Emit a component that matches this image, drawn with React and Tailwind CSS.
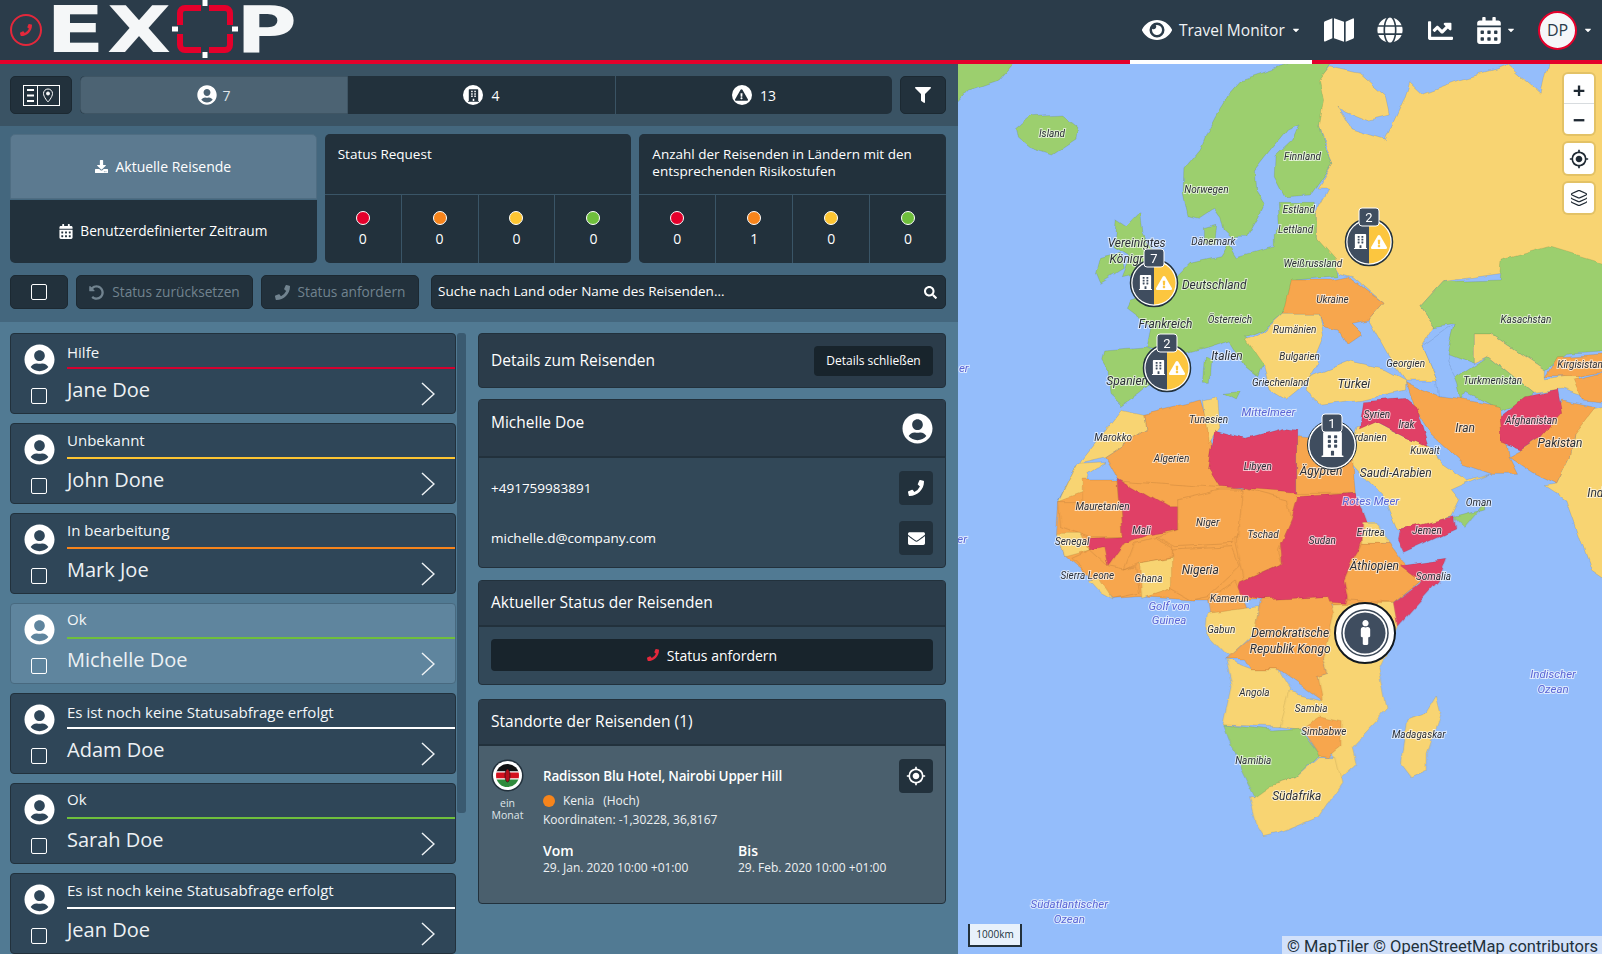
import { FaEye, FaMap, FaGlobe, FaChartLine, FaCalendarAlt, FaFilter, FaSearch, FaUndoAlt, FaPhoneAlt, FaEnvelope, FaDownload, FaUserCircle, FaBuilding, FaExclamationTriangle, FaMale, FaCaretDown } from "react-icons/fa";
import { MdGpsFixed } from "react-icons/md";
import { Layers } from "lucide-react";

const RISK = { red: "#e4002b", orange: "#f7841b", yellow: "#fdc532", green: "#6fbf3c" };

const TRAVELERS = [
  { status: "Hilfe", name: "Jane Doe", line: "#d4012f", top: 8 },
  { status: "Unbekannt", name: "John Done", line: "#fdc532", top: 6 },
  { status: "In bearbeitung", name: "Mark Joe", line: "#f7841b", top: 6 },
  { status: "Ok", name: "Michelle Doe", line: "#6fbf3c", active: true, top: 5 },
  { status: "Es ist noch keine Statusabfrage erfolgt", name: "Adam Doe", line: "#ffffff", top: 8 },
  { status: "Ok", name: "Sarah Doe", line: "#6fbf3c", top: 5 },
  { status: "Es ist noch keine Statusabfrage erfolgt", name: "Jean Doe", line: "#ffffff", top: 6 },
];

// map shapes, coordinates were read off the zoomed reference (x * 2.435, y * 3)
const SEA = "#94bdfb";
const G = "#9ccf6e";
const Y = "#f8d472";
const O = "#f7a64d";
const R = "#e04066";

const NORTH = [
  [G, "-20,-10 150,-10 100,60 30,90 -20,160"],
  [G, "145,200 175,170 255,165 290,200 285,240 230,285 180,265 150,235"],
  [Y, "875,60 905,20 975,40 1040,110 1050,165 1000,180 940,150 925,135 960,210 1040,240 1085,120 1100,65 1130,100 1220,60 1310,30 1340,15 1420,100 1440,-10 1600,-10 1600,640 1325,640 1180,665 1125,740 1160,800 1130,860 1165,960 1090,960 1050,890 1000,780 1035,730 960,650 930,640 870,530 870,460 900,390 875,390 915,310 880,200"],
  [G, "860,-10 920,-10 880,60 890,120 880,200 895,260 915,310 860,405 795,410 770,350 772,290 815,240 830,195 800,210 760,270 722,330 725,390 745,430 730,470 700,535 670,535 648,510 640,470 625,445 585,478 560,470 548,400 550,330 590,270 610,210 640,140 660,100 690,60"],
  [G, "780,430 870,430 870,530 920,600 925,650 820,660 790,760 740,810 700,830 745,900 730,950 700,920 660,840 610,860 540,885 460,860 470,800 410,745 420,720 470,700 530,660 570,610 640,590 660,550 680,590 770,560 770,530 782,500"],
  [G, "385,480 410,500 445,455 450,520 480,590 470,630 400,650 420,590 380,560"],
  [G, "345,595 395,580 405,625 345,670 335,640"],
  [G, "600,500 630,490 625,560 600,550"],
  [G, "355,870 460,860 520,900 490,950 440,1000 400,1035 370,1000 365,930 350,900"],
  [G, "600,890 615,900 612,970 595,970"],
  [G, "650,1000 690,995 680,1020"],
  [G, "1600,620 1440,560 1325,600 1320,660 1180,665 1125,740 1160,800 1210,790 1190,880 1255,910 1255,825 1300,825 1430,930 1480,880 1600,870"],
  [O, "810,660 910,660 950,650 1035,730 1000,780 960,790 985,820 950,850 930,810 890,800 880,760 790,760"],
  [Y, "790,760 880,760 890,830 870,890 880,910 850,970 800,1020 760,990 745,920 700,840 745,810"],
  [Y, "860,950 950,905 1045,930 1090,960 1090,990 985,1020 890,1035 850,990"],
  [Y, "1255,825 1300,825 1430,930 1430,960 1510,940 1520,1010 1470,990 1400,1000 1290,890 1255,910"],
  [G, "1205,960 1290,890 1400,1000 1370,1030 1320,1050 1240,1000 1225,1030"],
  [O, "1460,890 1600,880 1600,930 1510,950 1430,950"],
  [O, "1500,960 1600,930 1600,1030 1520,1020"],
  [SEA, "1130,860 1210,790 1190,900 1215,960 1230,1030 1170,1010 1165,960"],
  [Y, "1500,1060 1600,1030 1600,1580 1540,1530 1480,1320 1430,1280 1460,1275 1490,1200 1500,1120"],
  [O, "1090,965 1130,990 1170,1010 1235,1020 1320,1040 1340,1190 1360,1240 1300,1240 1230,1210 1150,1120 1110,1040"],
  [O, "1470,1020 1550,1040 1500,1120 1490,1200 1460,1275 1400,1240 1340,1190 1370,1170 1420,1130"],
  [R, "1380,1010 1460,990 1470,1060 1420,1130 1370,1170 1325,1150 1320,1070"],
  [Y, "970,1100 1020,1085 1090,1130 1150,1160 1180,1210 1240,1260 1290,1240 1200,1290 1220,1320 1200,1370 1130,1400 1070,1410 1040,1320 950,1200"],
  [R, "985,1025 1090,1015 1115,1040 1145,1160 1090,1130 1020,1085 975,1110"],
  [Y, "400,1045 455,1060 460,1110 360,1190 290,1210 245,1320 300,1200"],
  [Y, "245,1325 290,1210 360,1205 315,1240 300,1325"],
  [O, "455,1060 590,1020 610,1100 640,1290 510,1340 390,1255 360,1190 460,1110"],
  [Y, "595,1020 630,1010 635,1100 610,1150"],
  [R, "625,1110 700,1135 790,1105 825,1110 825,1310 780,1320 690,1285 640,1290 610,1230"],
  [O, "825,1130 960,1150 970,1300 825,1310"],
];

// these were read off the lower crop, they get moved down by 1320
const SOUTH = [
  [O, "245,5 390,-60 825,-20 970,-20 1000,80 1075,190 1130,240 1050,320 910,315 735,300 610,300 570,300 440,290 380,295 330,240 260,170 240,100"],
  [O, "245,5 300,5 300,-60 390,-60 400,110 320,110 250,80"],
  [R, "390,-65 510,20 535,20 535,90 460,105 405,130 365,200 355,140 320,150 320,115 400,110"],
  [O, "535,0 640,-30 690,-30 700,70 670,130 530,140 480,110 535,90"],
  [O, "690,-35 800,0 810,60 780,150 790,190 700,240 680,130"],
  [R, "825,-10 970,-20 1000,80 985,110 955,240 945,310 820,300 730,300 680,280 690,245 790,190 785,130 810,60"],
  [Y, "985,70 1020,70 1050,130 985,130"],
  [O, "985,130 1050,130 1080,180 1130,240 1060,310 950,300 940,240 960,180"],
  [R, "1075,195 1190,175 1170,240 1065,385 1050,320 1130,245"],
  [R, "1075,90 1205,50 1210,90 1085,160 1070,120"],
  [G, "1205,55 1280,30 1280,10 1230,85"],
  [Y, "240,100 300,100 320,150 260,170"],
  [O, "275,175 320,150 365,200 405,210 430,200 440,280 380,295 330,240"],
  [O, "405,210 430,130 480,115 520,140 520,170 440,190"],
  [Y, "440,190 530,170 520,265 445,295"],
  [Y, "320,240 345,235 380,300 350,280"],
  [O, "520,150 670,140 690,200 610,290 570,300 520,265"],
  [O, "610,300 680,240 690,270 710,340 615,340"],
  [Y, "610,340 730,320 720,400 660,470 605,400"],
  [Y, "910,315 1060,310 1070,380 1025,500 1045,630 960,740 970,790 925,840 915,760 880,770 845,690 785,680 785,570 880,600 875,530 900,520 890,480"],
  [O, "735,300 900,290 915,340 890,480 900,520 875,530 885,600 780,510 715,510 700,480 650,480 715,410"],
  [Y, "650,480 715,510 780,510 810,570 785,680 645,675 665,560"],
  [G, "645,675 770,690 830,685 880,765 825,830 765,855 755,885 720,890 680,790"],
  [O, "835,685 880,650 935,665 935,740 905,770 880,765"],
  [Y, "720,890 760,855 825,830 880,770 920,770 935,850 880,950 780,1000 745,1010 730,980 710,890"],
  [Y, "1165,590 1175,640 1140,760 1140,810 1105,830 1080,790 1095,660 1140,640"],
];

// [text, x, y, font size, sea label]
const LABELS = [
  ["Island", 229, 220, 10], ["Finnland", 839, 288, 10], ["Norwegen", 605, 389, 10], ["Estland", 830, 447, 10],
  ["Lettland", 822, 509, 10], ["Dänemark", 622, 545, 10], ["Vereinigtes", 435, 549, 12], ["Königr", 410, 597, 12],
  ["Deutschland", 624, 675, 12], ["Weißrussland", 864, 610, 10], ["Ukraine", 912, 718, 10], ["Kasachstan", 1383, 777, 10],
  ["Frankreich", 505, 791, 12], ["Österreich", 662, 777, 10], ["Rumänien", 820, 807, 10], ["Bulgarien", 832, 888, 10],
  ["Italien", 655, 887, 12], ["Georgien", 1090, 910, 10], ["Kirgisistan", 1515, 913, 10], ["Spanien", 412, 962, 12],
  ["Griechenland", 785, 968, 10], ["Türkei", 964, 969, 12.5], ["Turkmenistan", 1302, 961, 10], ["Mittelmeer", 756, 1055, 11.5, true],
  ["Tunesien", 610, 1079, 10], ["Marokko", 378, 1133, 10], ["Syrien", 1020, 1063, 10], ["Irak", 1092, 1094, 10],
  ["Afghanistan", 1396, 1080, 10], ["Iran", 1235, 1103, 12], ["rdanien", 1005, 1133, 10], ["Pakistan", 1466, 1150, 12],
  ["Kuwait", 1137, 1170, 10], ["Algerien", 520, 1196, 10], ["Libyen", 730, 1218, 10], ["Ägypten", 884, 1232, 12],
  ["Saudi-Arabien", 1066, 1240, 12], ["Ind", 1552, 1300, 12], ["Rotes Meer", 1005, 1323, 11.5, true], ["Oman", 1268, 1327, 10],
  ["Mauretanien", 352, 1340, 10], ["Niger", 608, 1387, 10], ["Mali", 447, 1410, 10], ["Tschad", 743, 1423, 10],
  ["Eritrea", 1005, 1418, 10], ["Jemen", 1142, 1411, 10], ["Sudan", 887, 1441, 10], ["Senegal", 278, 1444, 10],
  ["Äthiopien", 1014, 1518, 12], ["Nigeria", 590, 1529, 12], ["Somalia", 1158, 1550, 10], ["Sierra Leone", 315, 1546, 10],
  ["Ghana", 464, 1556, 10], ["Kamerun", 661, 1615, 10], ["Golf von", 514, 1638, 11.5, true], ["Guinea", 514, 1681, 11.5, true],
  ["Gabun", 641, 1709, 10], ["Demokratische", 809, 1720, 12], ["Republik Kongo", 809, 1768, 12], ["Indischer", 1449, 1843, 11.5, true],
  ["Ozean", 1449, 1887, 11.5, true], ["Angola", 722, 1898, 10], ["Sambia", 860, 1944, 10], ["Simbabwe", 891, 2014, 10],
  ["Madagaskar", 1122, 2023, 10], ["Namibia", 719, 2101, 10], ["Südafrika", 825, 2207, 12], ["Südatlantischer", 271, 2533, 11.5, true],
  ["Ozean", 271, 2577, 11.5, true], ["er", 14, 925, 11.5, true], ["er", 10, 1438, 11.5, true],
];

function px(x) {
  return 958 + x / 2.435;
}
function py(y) {
  return 60 + y / 3;
}

function Dark({ className = "", children }) {
  return <div className={`bg-[#22313c] border border-[#1c2932] ${className}`}>{children}</div>;
}

function RiskCell({ color, value }) {
  return (
    <div className="flex-1 bg-[#22313c] flex flex-col items-center pt-[16px] gap-[2px]">
      <span className="w-[14px] h-[14px] rounded-full border border-white" style={{ backgroundColor: color }} />
      <span className="text-[14px] leading-[24px]">{value}</span>
    </div>
  );
}

function RiskPanel({ title, values }) {
  return (
    <div className="w-[307px] rounded-[5px] overflow-hidden flex flex-col gap-px bg-[#3a5567]">
      <div className="h-[60px] bg-[#22313c] px-[13px] pt-[12px] text-[13.500px] leading-[17px]">{title}</div>
      <div className="h-[68px] flex gap-px">
        <RiskCell color={RISK.red} value={values[0]} />
        <RiskCell color={RISK.orange} value={values[1]} />
        <RiskCell color={RISK.yellow} value={values[2]} />
        <RiskCell color={RISK.green} value={values[3]} />
      </div>
    </div>
  );
}

function TravelerCard({ t }) {
  return (
    <div className={`h-[81px] shrink-0 rounded-[4px] border border-[#22313c] flex ${t.active ? "bg-[#5f859e] border-[#48697f]" : "bg-[#2f4658]"}`}>
      <div className="w-[56px] shrink-0 flex flex-col items-center pt-[10px]">
        <FaUserCircle className="w-[31px] h-[31px] text-white" />
        <span className="mt-[13px] w-[16px] h-[16px] rounded-[2px] border border-white" />
      </div>
      <div className="flex-1 min-w-0 flex flex-col">
        <div className="h-[33px] text-[15px] leading-[20px] text-[#f3f6f8]" style={{ paddingTop: t.top }}>{t.status}</div>
        <div className="h-[2px]" style={{ backgroundColor: t.line }} />
        <div className="flex-1 flex items-center justify-between pr-[20px]">
          <span className="text-[20px] leading-[26px] text-[#edf1f4] mb-[3px]">{t.name}</span>
          <svg className="mt-[6px]" width="14" height="24" viewBox="0 0 14 24" fill="none" stroke="#eef2f5" strokeWidth="1.500">
            <path d="M1 1l12 11L1 23" />
          </svg>
        </div>
      </div>
    </div>
  );
}

function IconBtn({ children }) {
  return <div className="w-[34px] h-[34px] shrink-0 rounded-[4px] bg-[#22313c] flex items-center justify-center text-white">{children}</div>;
}

function Badge({ x, y, n }) {
  return (
    <g>
      <rect x={x - 10} y={y - 9} width="20" height="18" rx="3" fill="#3f4d5f" stroke="#fff" strokeWidth="1" />
      <text x={x} y={y + 0.5} textAnchor="middle" dominantBaseline="central" fontSize="13" fill="#fff" fontFamily="Roboto, sans-serif">{n}</text>
    </g>
  );
}

function SplitMarker({ x, y, n }) {
  return (
    <g>
      <circle cx={x} cy={y} r="23.5" fill="#fff" stroke="#22313c" strokeWidth="1.500" />
      <path d={`M${x} ${y - 21.5}A21.5 21.5 0 0 0 ${x} ${y + 21.5}Z`} fill="#3f4d5f" />
      <path d={`M${x} ${y - 21.5}A21.5 21.5 0 0 1 ${x} ${y + 21.5}Z`} fill="#fcc63f" />
      <FaBuilding x={x - 16} y={y - 8} size={15} color="#fff" />
      <FaExclamationTriangle x={x + 2} y={y - 8} size={16} color="#fff" />
      <Badge x={x} y={y - 25} n={n} />
    </g>
  );
}

function WorldMap() {
  return (
    <svg className="absolute inset-0 w-full h-full" viewBox="958 64 644 890">
      <defs>
        {/* roughens the straight polygon edges so coasts look less cut out */}
        <filter id="rough" filterUnits="userSpaceOnUse" x="940" y="50" width="680" height="920">
          <feTurbulence type="fractalNoise" baseFrequency="0.04" numOctaves="3" seed="4" />
          <feDisplacementMap in="SourceGraphic" scale="8" xChannelSelector="R" yChannelSelector="G" />
        </filter>
      </defs>
      <rect x="958" y="64" width="644" height="890" fill={SEA} />
      <g filter="url(#rough)">
        <g transform="translate(958 60) scale(0.41068 0.33333)" stroke="#000" strokeOpacity="0.12" strokeWidth="2" strokeLinejoin="round">
          {NORTH.map(([fill, points], i) => <polygon key={i} fill={fill} points={points} />)}
          <g transform="translate(0 1320)">
            {SOUTH.map(([fill, points], i) => <polygon key={i} fill={fill} points={points} />)}
          </g>
        </g>
      </g>
      {LABELS.map(([text, x, y, size, sea], i) => (
        <text
          key={i}
          x={px(x)}
          y={py(y)}
          textAnchor="middle"
          dominantBaseline="central"
          fontFamily="Roboto, sans-serif"
          fontStyle="italic"
          fontSize={size}
          fill={sea ? "#5b66d6" : "#2c3038"}
          stroke="#fff"
          strokeOpacity="0.65"
          strokeWidth="2"
          paintOrder="stroke"
        >
          {text}
        </text>
      ))}
      <SplitMarker x={1154} y={283} n={7} />
      <SplitMarker x={1369} y={242} n={2} />
      <SplitMarker x={1167} y={368} n={2} />
      <g>
        <circle cx="1332" cy="445" r="23.5" fill="#3f4d5f" stroke="#fff" strokeWidth="2" />
        <circle cx="1332" cy="445" r="24.5" fill="none" stroke="#22313c" strokeWidth="1" />
        <FaBuilding x={1320} y={432} size={25} color="#fff" />
        <Badge x={1332} y={423} n={1} />
      </g>
      <g>
        <circle cx="1365" cy="633" r="30" fill="#fff" stroke="#11181f" strokeWidth="2" />
        <circle cx="1365" cy="633" r="23" fill="#fff" stroke="#3a4757" strokeWidth="1.500" />
        <circle cx="1365" cy="633" r="20.500" fill="#3f4d5f" />
        <FaMale x={1353} y={620} size={25} color="#fff" />
      </g>
    </svg>
  );
}

export default function App() {
  return (
    <div className="w-[1602px] h-[954px] overflow-hidden flex flex-col text-white font-['Open_Sans',sans-serif]">
      <header className="h-[64px] shrink-0 bg-[#2b3c4a] border-b-4 border-[#e4002b] flex items-center relative">
        <div className="ml-[10px] w-[32px] h-[32px] rounded-full border-2 border-[#e4283b] flex items-center justify-center">
          <FaPhoneAlt className="w-[12px] h-[12px] text-[#e4283b] -scale-x-100" />
        </div>
        <div className="ml-[4px] h-[60px] flex items-center font-['DejaVu_Sans',sans-serif] font-bold text-[64px] leading-[56px] text-[#f5f7f8]">
          <span className="w-[61px] scale-x-[1.34] origin-left">E</span>
          <span className="w-[65px] scale-x-[1.3] origin-left">X</span>
          <svg className="w-[66px] h-[60px]" viewBox="0 0 66 60">
            <path d="M29 8H13a5 5 0 0 0-5 5v12M37 8h16a5 5 0 0 1 5 5v12M29 50H13a5 5 0 0 1-5-5V34M37 50h16a5 5 0 0 0 5-5V34" fill="none" stroke="#e4002b" strokeWidth="6" />
            <rect x="30.500" y="0" width="5" height="6" fill="#fff" />
            <rect x="30.500" y="52" width="5" height="6" fill="#fff" />
            <rect x="0" y="26.500" width="6" height="5" fill="#fff" />
            <rect x="60" y="26.500" width="6" height="5" fill="#fff" />
          </svg>
          <span className="ml-[-2px] scale-x-[1.3] origin-left">P</span>
        </div>
        <nav className="ml-auto flex items-center h-full">
          <div className="relative w-[182px] h-[60px] flex items-center pl-[12px]">
            <FaEye className="w-[30px] h-[30px]" />
            <span className="ml-[7px] mt-[1px] text-[15.500px] text-[#f0f3f5]">Travel Monitor</span>
            <FaCaretDown className="ml-[6px] w-[10px] h-[10px]" />
            <span className="absolute left-0 right-0 -bottom-[4px] h-[4px] bg-white" />
          </div>
          <FaMap className="ml-[12px] w-[30px] h-[28px]" />
          <FaGlobe className="ml-[23px] w-[26px] h-[26px]" />
          <FaChartLine className="ml-[24px] w-[27px] h-[25px]" />
          <FaCalendarAlt className="ml-[23px] w-[24px] h-[27px]" />
          <FaCaretDown className="ml-[5px] w-[10px] h-[10px]" />
          <div className="ml-[22px] w-[39px] h-[39px] rounded-full bg-[#f5f7f9] border-2 border-[#e4002b] flex items-center justify-center text-[#2b3c4a] text-[16px]">DP</div>
          <FaCaretDown className="ml-[6px] mr-[9px] w-[10px] h-[10px]" />
        </nav>
      </header>

      <div className="flex-1 flex min-h-0">
        <div className="w-[958px] shrink-0 flex flex-col">
          <div className="h-[62px] shrink-0 bg-[#3a5364] pt-[12px] pl-[10px] pr-[12px] flex gap-[8px]">
            <Dark className="w-[62px] h-[38px] rounded-[5px] flex items-center justify-center">
              <svg width="37" height="21" viewBox="0 0 37 21" fill="none" stroke="#fff">
                <rect x="0.500" y="0.500" width="36" height="20" />
                <path d="M14.500 0v21" />
                <path d="M4 5h7M4 10.500h7M4 16h7" strokeWidth="2" />
                <path d="M25 4a4.500 4.500 0 0 0-4.500 4.500C20.500 12 25 17 25 17s4.500-5 4.500-8.500A4.500 4.500 0 0 0 25 4z" />
                <circle cx="25" cy="8.500" r="1.500" fill="#fff" />
              </svg>
            </Dark>
            <div className="w-[812px] h-[38px] flex rounded-[5px] overflow-hidden bg-[#22313c] text-[14px]">
              <div className="w-[268px] bg-[#4c6373] border border-[#3f5564] rounded-l-[5px] flex items-center justify-center gap-[5px]">
                <FaUserCircle className="w-[20px] h-[20px]" />
                <span className="text-[#dfe5e9]">7</span>
              </div>
              <div className="w-[268px] border-r border-[#3a5364] flex items-center justify-center gap-[8px]">
                <span className="w-[20px] h-[20px] rounded-full bg-white flex items-center justify-center"><FaBuilding className="w-[11px] h-[13px] text-[#22313c]" /></span>
                <span>4</span>
              </div>
              <div className="flex-1 flex items-center justify-center gap-[8px]">
                <span className="w-[20px] h-[20px] rounded-full bg-white flex items-center justify-center"><FaExclamationTriangle className="w-[13px] h-[12px] text-[#22313c]" /></span>
                <span>13</span>
              </div>
            </div>
            <Dark className="w-[46px] h-[38px] rounded-[5px] flex items-center justify-center">
              <FaFilter className="w-[16px] h-[16px]" />
            </Dark>
          </div>

          <div className="h-[196px] shrink-0 bg-[#44677e] pt-[8px] pl-[10px] pr-[12px] flex flex-col gap-[12px]">
            <div className="h-[129px] flex gap-[8px]">
              <div className="w-[307px] flex flex-col gap-px">
                <div className="h-[65px] bg-[#5c7a90] border border-[#4f6d82] rounded-t-[5px] flex items-center justify-center gap-[7px] text-[14px]">
                  <FaDownload className="w-[13px] h-[13px]" />
                  <span>Aktuelle Reisende</span>
                </div>
                <div className="h-[63px] bg-[#22313c] rounded-b-[5px] flex items-center justify-center gap-[7px] text-[13.700px]">
                  <FaCalendarAlt className="w-[14px] h-[15px]" />
                  <span>Benutzerdefinierter Zeitraum</span>
                </div>
              </div>
              <RiskPanel title="Status Request" values={[0, 0, 0, 0]} />
              <RiskPanel title={<>Anzahl der Reisenden in Ländern mit den<br />entsprechenden Risikostufen</>} values={[0, 1, 0, 0]} />
            </div>
            <div className="h-[34px] flex">
              <Dark className="w-[58px] rounded-[5px] flex items-center justify-center">
                <span className="w-[16px] h-[16px] rounded-[2px] border border-white" />
              </Dark>
              <Dark className="ml-[8px] w-[177px] rounded-[5px] flex items-center justify-center gap-[8px] text-[13.700px] text-[#71838f]">
                <FaUndoAlt className="w-[15px] h-[15px]" />
                <span>Status zurücksetzen</span>
              </Dark>
              <Dark className="ml-[8px] w-[158px] rounded-[5px] flex items-center justify-center gap-[8px] text-[13.700px] text-[#71838f]">
                <FaPhoneAlt className="w-[15px] h-[15px] -scale-x-100" />
                <span>Status anfordern</span>
              </Dark>
              <Dark className="ml-[12px] flex-1 rounded-[5px] flex items-center justify-between pl-[6px] pr-[8px] text-[13.500px]">
                <span className="mb-[2px]">Suche nach Land oder Name des Reisenden…</span>
                <FaSearch className="w-[13px] h-[13px]" />
              </Dark>
            </div>
          </div>

          <div className="flex-1 min-h-0 overflow-hidden bg-[#517a93] pt-[11px] pl-[10px] pr-[12px] flex gap-[12px]">
            <div className="w-[456px] shrink-0 flex">
              <div className="w-[446px] flex flex-col gap-[9px]">
                {TRAVELERS.map((t) => <TravelerCard key={t.name} t={t} />)}
              </div>
              <div className="w-[9px] ml-[1px] h-[480px] bg-[#3a5a70] rounded-[3px]" />
            </div>

            <div className="flex-1 min-w-0 flex flex-col">
              <div className="h-[55px] shrink-0 rounded-[4px] border border-[#22313c] bg-[#2b3c4a] flex items-center justify-between pl-[12px] pr-[12px]">
                <span className="text-[15.500px]">Details zum Reisenden</span>
                <span className="w-[119px] h-[30px] rounded-[4px] bg-[#18242c] flex items-center justify-center text-[12px]">Details schließen</span>
              </div>

              <div className="mt-[11px] h-[169px] shrink-0 rounded-[4px] border border-[#22313c] bg-[#324858] flex flex-col">
                <div className="h-[58px] shrink-0 bg-[#2b3c4a] border-b-2 border-[#22313c] flex justify-between pl-[12px] pr-[12px] pt-[12px]">
                  <span className="text-[15.500px] leading-[20px]">Michelle Doe</span>
                  <FaUserCircle className="w-[31px] h-[31px] mt-[1px]" />
                </div>
                <div className="flex-1 flex flex-col pl-[12px] pr-[12px] pt-[13px] gap-[16px] text-[13.500px]">
                  <div className="flex items-center justify-between">
                    <span>+491759983891</span>
                    <IconBtn><FaPhoneAlt className="w-[16px] h-[16px] -scale-x-100" /></IconBtn>
                  </div>
                  <div className="flex items-center justify-between">
                    <span>michelle.d@company.com</span>
                    <IconBtn><FaEnvelope className="w-[17px] h-[17px]" /></IconBtn>
                  </div>
                </div>
              </div>

              <div className="mt-[12px] h-[105px] shrink-0 rounded-[4px] border border-[#22313c] bg-[#324858] flex flex-col">
                <div className="h-[46px] shrink-0 bg-[#2b3c4a] border-b-2 border-[#22313c] pl-[12px] flex items-center text-[15.500px]">Aktueller Status der Reisenden</div>
                <div className="mx-[12px] mt-[12px] h-[32px] rounded-[4px] bg-[#18242c] flex items-center justify-center gap-[8px] text-[14px]">
                  <FaPhoneAlt className="w-[12px] h-[12px] text-[#e4283b] -scale-x-100" />
                  <span>Status anfordern</span>
                </div>
              </div>

              <div className="mt-[14px] h-[205px] shrink-0 rounded-[4px] border border-[#22313c] bg-[#4a5f6d] flex flex-col">
                <div className="h-[46px] shrink-0 bg-[#2b3c4a] border-b-2 border-[#22313c] pl-[12px] flex items-center text-[15.500px]">Standorte der Reisenden (1)</div>
                <div className="flex-1 flex pl-[12px] pr-[12px] pt-[13px]">
                  <div className="w-[33px] shrink-0 flex flex-col items-center">
                    <svg width="33" height="33" viewBox="0 0 33 33">
                      <circle cx="16.500" cy="16.500" r="16" fill="#22313c" />
                      <circle cx="16.500" cy="16.500" r="14.500" fill="#fff" />
                      <clipPath id="flag"><circle cx="16.500" cy="16.500" r="11.500" /></clipPath>
                      <g clipPath="url(#flag)">
                        <rect x="4" y="4" width="25" height="8.500" fill="#111" />
                        <rect x="4" y="12.500" width="25" height="1" fill="#fff" />
                        <rect x="4" y="13.500" width="25" height="6" fill="#d3121f" />
                        <rect x="4" y="19.500" width="25" height="1" fill="#fff" />
                        <rect x="4" y="20.500" width="25" height="8.500" fill="#2f8a3c" />
                      </g>
                      <ellipse cx="16.500" cy="16.500" rx="2.500" ry="6.500" fill="#b5101c" stroke="#111" strokeWidth="0.600" />
                    </svg>
                    <span className="mt-[5px] text-[10.500px] leading-[12px] text-center text-[#dfe5e9]">ein<br />Monat</span>
                  </div>
                  <div className="ml-[19px] flex-1 min-w-0">
                    <div className="mt-[7px] text-[13.500px] tracking-[-0.2px] leading-[20px] font-semibold">Radisson Blu Hotel, Nairobi Upper Hill</div>
                    <div className="mt-[7px] flex items-center text-[12px] leading-[16px] text-[#eef1f3]">
                      <span className="w-[12px] h-[12px] rounded-full bg-[#f7841b]" />
                      <span className="ml-[8px]">Kenia</span>
                      <span className="ml-[9px]">(Hoch)</span>
                    </div>
                    <div className="mt-[3px] text-[12px] leading-[16px] text-[#eef1f3]">Koordinaten: -1,30228, 36,8167</div>
                    <div className="mt-[14px] flex">
                      <div className="w-[195px]">
                        <div className="text-[14px] leading-[18px] font-semibold">Vom</div>
                        <div className="text-[12px] leading-[16px] text-[#eef1f3]">29. Jan. 2020 10:00 +01:00</div>
                      </div>
                      <div>
                        <div className="text-[14px] leading-[18px] font-semibold">Bis</div>
                        <div className="text-[12px] leading-[16px] text-[#eef1f3]">29. Feb. 2020 10:00 +01:00</div>
                      </div>
                    </div>
                  </div>
                  <IconBtn><MdGpsFixed className="w-[20px] h-[20px]" /></IconBtn>
                </div>
              </div>
            </div>
          </div>
        </div>

        <div className="flex-1 relative overflow-hidden">
          <WorldMap />
          <div className="absolute right-[8px] top-[10px] flex flex-col gap-[9px] text-[#1f2933]">
            <div className="w-[30px] rounded-[4px] bg-white shadow-[0_0_0_2px_rgba(190,160,80,0.35)] flex flex-col">
              <div className="h-[30px] flex items-center justify-center border-b border-[#d8dcdf] text-[22px] font-bold leading-none">+</div>
              <div className="h-[30px] flex items-center justify-center text-[22px] font-bold leading-none">−</div>
            </div>
            <div className="w-[30px] h-[31px] rounded-[4px] bg-white shadow-[0_0_0_2px_rgba(190,160,80,0.35)] flex items-center justify-center">
              <MdGpsFixed className="w-[20px] h-[20px]" />
            </div>
            <div className="w-[30px] h-[30px] rounded-[4px] bg-white shadow-[0_0_0_2px_rgba(190,160,80,0.35)] flex items-center justify-center">
              <Layers className="w-[18px] h-[18px]" strokeWidth={1.5} />
            </div>
          </div>
          <div className="absolute left-[10px] bottom-[7px] w-[54px] h-[23px] bg-[#e8f1fb] border-2 border-t-0 border-[#22313c] flex items-center justify-center text-[10px] text-[#22313c]">1000km</div>
          <div className="absolute right-0 bottom-0 w-[320px] h-[18px] overflow-hidden bg-[#d2e1fa] pl-[5px] text-[16.500px] leading-[21px] text-[#22313c] whitespace-nowrap font-['Roboto',sans-serif]">© MapTiler © OpenStreetMap contributors</div>
        </div>
      </div>
    </div>
  );
}
